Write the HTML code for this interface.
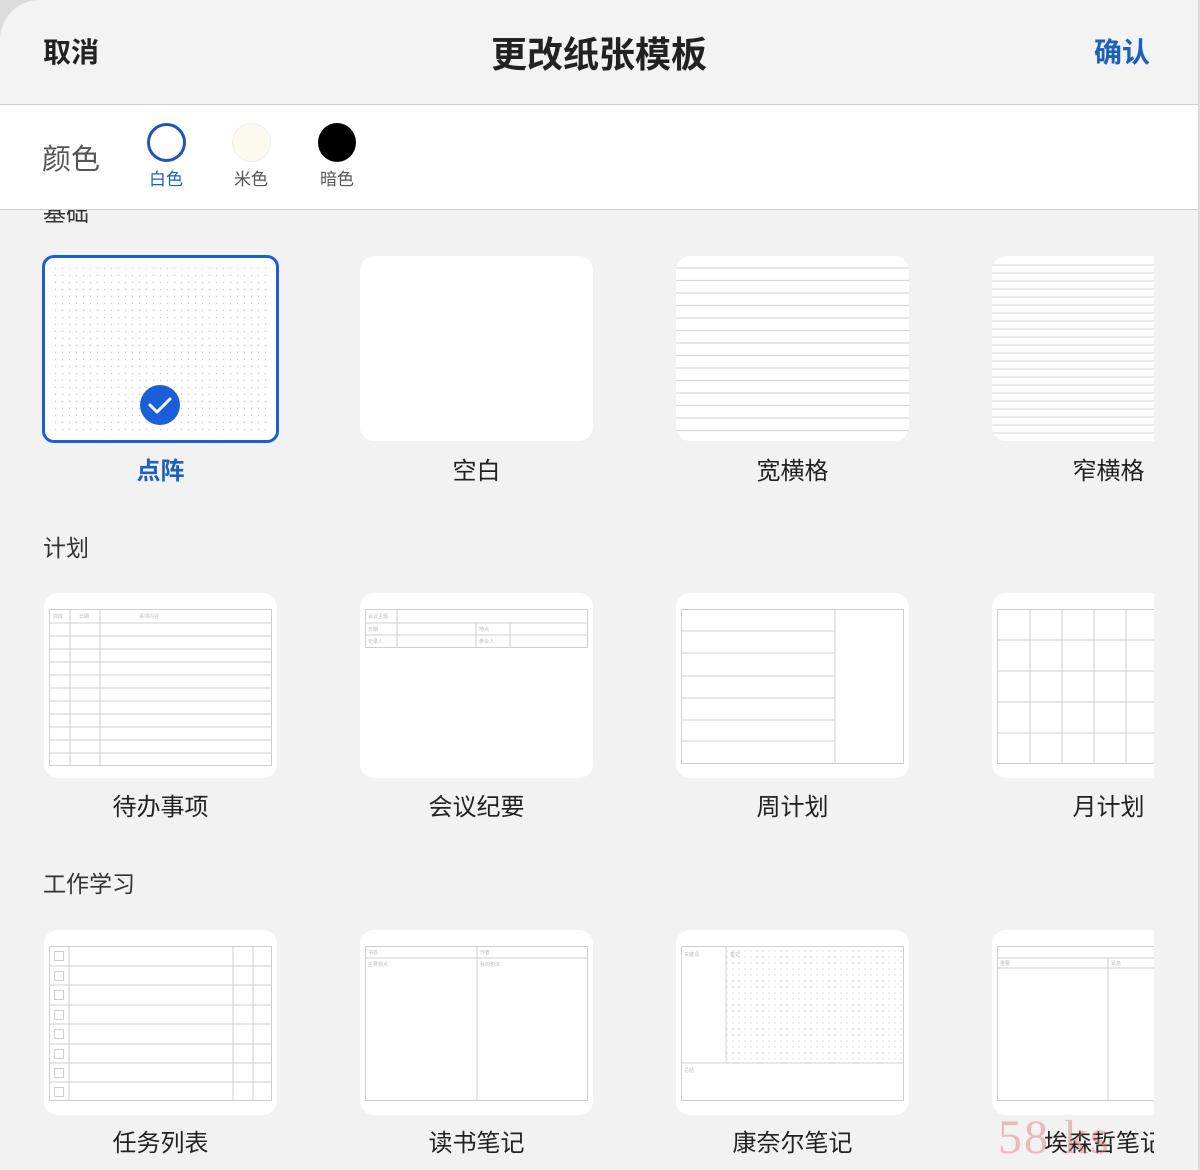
<!DOCTYPE html>
<html><head><meta charset="utf-8">
<style>
*{margin:0;padding:0;box-sizing:border-box}
body{width:1200px;height:1170px;overflow:hidden;background:#f2f2f3;font-family:"Liberation Sans","Noto Sans CJK SC",sans-serif;position:relative;color:#222}
.abs{position:absolute}
.hdr{left:0;top:0;width:1198px;height:105px;background:#f3f3f3;border-top-left-radius:40px;border-bottom:1px solid #cfcfcf}
.bar{left:0;top:104px;width:1198px;height:106px;background:#fff;border-top:1px solid #d0d0d0;border-bottom:1px solid #cfcfcf;z-index:5}
.card{position:absolute;width:233px;height:185px;background:#fff;border-radius:14px;overflow:hidden}
.lbl{position:absolute;width:233px;text-align:center;font-size:24px;color:#222}
.sec{position:absolute;left:43px;font-size:23px;color:#333}
.cl{position:absolute;font-size:17px;width:60px;text-align:center;color:#555}
</style></head><body>
<div class="abs" style="left:0;top:0;width:1200px;height:1170px;background:#dcdcdc"></div>
<div class="abs" style="left:0;top:0;width:1198px;height:1170px;background:#f2f2f3;border-top-left-radius:40px"></div>
<div class="abs hdr"></div>
<div class="abs" style="left:43px;top:31px;font-size:28px;font-weight:bold;color:#222">取消</div>
<div class="abs" style="left:0;width:1198px;top:26px;text-align:center;font-size:36px;font-weight:bold;color:#222">更改纸张模板</div>
<div class="abs" style="left:1094px;top:31px;font-size:28px;font-weight:bold;color:#1d5fbf">确认</div>

<div class="abs sec" style="top:194px;font-size:23px">基础</div>
<div class="abs bar">
  <div class="abs" style="left:42px;top:31px;font-size:29px;color:#555">颜色</div>
  <div class="abs" style="left:147px;top:18px;width:39px;height:39px;border-radius:50%;border:3px solid #1f55b8;background:#fff"></div>
  <div class="abs" style="left:232px;top:18px;width:39px;height:39px;border-radius:50%;border:1px solid #eee;background:#fcfaee"></div>
  <div class="abs" style="left:318px;top:18px;width:38px;height:39px;border-radius:50%;background:#000"></div>
  <div class="cl" style="left:136px;top:60px;color:#1d5fbf">白色</div>
  <div class="cl" style="left:221px;top:60px">米色</div>
  <div class="cl" style="left:307px;top:60px">暗色</div>
</div>

<!-- Row 1 -->
<div class="card" style="left:42px;top:255px;width:237px;height:188px;border:3px solid #1a5fd8;border-radius:12px">
<svg width="231" height="182" class="abs" style="left:0;top:0">
<defs><pattern id="d" width="7" height="7" patternUnits="userSpaceOnUse"><circle cx="3.5" cy="3.5" r="0.7" fill="#c8c8c8"/></pattern></defs>
<rect x="4" y="4" width="223" height="174" fill="url(#d)"/>
<circle cx="115" cy="147" r="20" fill="#1a5fd8"/>
<path d="M105 147 l7 7 l13 -13" stroke="#fff" stroke-width="3" fill="none" stroke-linecap="round" stroke-linejoin="round"/>
</svg></div>
<div class="lbl" style="left:44px;top:451px;color:#1d5fbf;font-weight:bold">点阵</div>

<div class="card" style="left:360px;top:256px"></div>
<div class="lbl" style="left:360px;top:451px">空白</div>

<div class="card" style="left:676px;top:256px"><svg width="233" height="185">
<g stroke="#d8d8d8" stroke-width="1.2">
<line x1="0" x2="233" y1="12" y2="12"/><line x1="0" x2="233" y1="24.5" y2="24.5"/><line x1="0" x2="233" y1="37" y2="37"/><line x1="0" x2="233" y1="49.5" y2="49.5"/><line x1="0" x2="233" y1="62" y2="62"/><line x1="0" x2="233" y1="74.5" y2="74.5"/><line x1="0" x2="233" y1="87" y2="87"/><line x1="0" x2="233" y1="99.5" y2="99.5"/><line x1="0" x2="233" y1="112" y2="112"/><line x1="0" x2="233" y1="124.5" y2="124.5"/><line x1="0" x2="233" y1="137" y2="137"/><line x1="0" x2="233" y1="149.5" y2="149.5"/><line x1="0" x2="233" y1="162" y2="162"/><line x1="0" x2="233" y1="174.5" y2="174.5"/>
</g></svg></div>
<div class="lbl" style="left:676px;top:451px">宽横格</div>

<div class="card" style="left:992px;top:256px;width:162px;border-radius:14px 0 0 14px"><svg width="162" height="185">
<g stroke="#d8d8d8" stroke-width="1">
<line x1="0" x2="162" y1="9" y2="9"/><line x1="0" x2="162" y1="17" y2="17"/><line x1="0" x2="162" y1="25" y2="25"/><line x1="0" x2="162" y1="33" y2="33"/><line x1="0" x2="162" y1="41" y2="41"/><line x1="0" x2="162" y1="49" y2="49"/><line x1="0" x2="162" y1="57" y2="57"/><line x1="0" x2="162" y1="65" y2="65"/><line x1="0" x2="162" y1="73" y2="73"/><line x1="0" x2="162" y1="81" y2="81"/><line x1="0" x2="162" y1="89" y2="89"/><line x1="0" x2="162" y1="97" y2="97"/><line x1="0" x2="162" y1="105" y2="105"/><line x1="0" x2="162" y1="113" y2="113"/><line x1="0" x2="162" y1="121" y2="121"/><line x1="0" x2="162" y1="129" y2="129"/><line x1="0" x2="162" y1="137" y2="137"/><line x1="0" x2="162" y1="145" y2="145"/><line x1="0" x2="162" y1="153" y2="153"/><line x1="0" x2="162" y1="161" y2="161"/><line x1="0" x2="162" y1="169" y2="169"/><line x1="0" x2="162" y1="177" y2="177"/>
</g></svg></div>
<div class="lbl" style="left:992px;top:451px">窄横格</div>

<div class="sec" style="top:529px">计划</div>

<!-- Row 2 -->
<div class="card" style="left:44px;top:593px"><svg width="233" height="185"><g stroke="#cfcfcf" fill="none" stroke-width="1">
<rect x="5.5" y="16.5" width="222" height="156"/>
<line x1="26" x2="26" y1="16" y2="172"/><line x1="56" x2="56" y1="16" y2="172"/>
<line x1="5" x2="228" y1="30" y2="30"/><line x1="5" x2="228" y1="43" y2="43"/><line x1="5" x2="228" y1="56" y2="56"/><line x1="5" x2="228" y1="69" y2="69"/><line x1="5" x2="228" y1="82" y2="82"/><line x1="5" x2="228" y1="95" y2="95"/><line x1="5" x2="228" y1="108" y2="108"/><line x1="5" x2="228" y1="121" y2="121"/><line x1="5" x2="228" y1="134" y2="134"/><line x1="5" x2="228" y1="147" y2="147"/><line x1="5" x2="228" y1="160" y2="160"/>
</g><g fill="#bbb" font-size="5"><text x="9" y="25">完成</text><text x="35" y="25">日期</text><text x="95" y="25">事项内容</text></g></svg></div>
<div class="lbl" style="left:44px;top:787px">待办事项</div>

<div class="card" style="left:360px;top:593px"><svg width="233" height="185"><g stroke="#cfcfcf" fill="none">
<rect x="5.5" y="16.5" width="222" height="38"/>
<line x1="37" x2="37" y1="16" y2="54"/><line x1="5" x2="228" y1="30" y2="30"/><line x1="5" x2="228" y1="42" y2="42"/>
<line x1="116" x2="116" y1="30" y2="54"/><line x1="150" x2="150" y1="30" y2="54"/>
</g><g fill="#bbb" font-size="5"><text x="8" y="25">会议主题</text><text x="8" y="38">日期</text><text x="8" y="50">记录人</text><text x="119" y="38">地点</text><text x="119" y="50">参会人</text></g></svg></div>
<div class="lbl" style="left:360px;top:787px">会议纪要</div>

<div class="card" style="left:676px;top:593px"><svg width="233" height="185"><g stroke="#cfcfcf" fill="none">
<rect x="5.5" y="16.5" width="222" height="154"/>
<line x1="159" x2="159" y1="16" y2="170"/>
<line x1="5" x2="159" y1="38" y2="38"/><line x1="5" x2="159" y1="60" y2="60"/><line x1="5" x2="159" y1="83" y2="83"/><line x1="5" x2="159" y1="105" y2="105"/><line x1="5" x2="159" y1="127" y2="127"/><line x1="5" x2="159" y1="148" y2="148"/>
</g></svg></div>
<div class="lbl" style="left:676px;top:787px">周计划</div>

<div class="card" style="left:992px;top:593px;width:162px;border-radius:14px 0 0 14px"><svg width="162" height="185"><g stroke="#cfcfcf" fill="none">
<rect x="5.5" y="16.5" width="170" height="154"/>
<line x1="38" x2="38" y1="16" y2="170"/><line x1="70" x2="70" y1="16" y2="170"/><line x1="102" x2="102" y1="16" y2="170"/><line x1="134" x2="134" y1="16" y2="170"/>
<line x1="5" x2="162" y1="47" y2="47"/><line x1="5" x2="162" y1="78" y2="78"/><line x1="5" x2="162" y1="109" y2="109"/><line x1="5" x2="162" y1="140" y2="140"/>
</g></svg></div>
<div class="lbl" style="left:992px;top:787px">月计划</div>

<div class="sec" style="top:865px">工作学习</div>

<!-- Row 3 -->
<div class="card" style="left:44px;top:930px"><svg width="233" height="185"><g stroke="#cfcfcf" fill="none">
<rect x="5.5" y="16.5" width="222" height="154"/>
<line x1="25" x2="25" y1="16" y2="170"/><line x1="189" x2="189" y1="16" y2="170"/><line x1="209" x2="209" y1="16" y2="170"/>
<line x1="5" x2="228" y1="36" y2="36"/><line x1="5" x2="228" y1="55" y2="55"/><line x1="5" x2="228" y1="75" y2="75"/><line x1="5" x2="228" y1="94" y2="94"/><line x1="5" x2="228" y1="114" y2="114"/><line x1="5" x2="228" y1="133" y2="133"/><line x1="5" x2="228" y1="152" y2="152"/>
<rect x="10.5" y="21.5" width="9" height="9"/><rect x="10.5" y="41.5" width="9" height="9"/><rect x="10.5" y="60.5" width="9" height="9"/><rect x="10.5" y="80.5" width="9" height="9"/><rect x="10.5" y="99.5" width="9" height="9"/><rect x="10.5" y="119.5" width="9" height="9"/><rect x="10.5" y="138.5" width="9" height="9"/><rect x="10.5" y="157.5" width="9" height="9"/>
</g></svg></div>
<div class="lbl" style="left:44px;top:1123px">任务列表</div>

<div class="card" style="left:360px;top:930px"><svg width="233" height="185"><g stroke="#cfcfcf" fill="none">
<rect x="5.5" y="16.5" width="222" height="154"/><line x1="5" x2="228" y1="28" y2="28"/><line x1="117" x2="117" y1="16" y2="170"/>
</g><g fill="#bbb" font-size="5"><text x="8" y="24">书名</text><text x="120" y="24">作者</text><text x="8" y="36">主要观点</text><text x="120" y="36">我的想法</text></g></svg></div>
<div class="lbl" style="left:360px;top:1123px">读书笔记</div>

<div class="card" style="left:676px;top:930px"><svg width="233" height="185">
<defs><pattern id="d2" width="6" height="6" patternUnits="userSpaceOnUse"><circle cx="3" cy="3" r="0.6" fill="#c4c4c4"/></pattern></defs>
<rect x="51" y="20" width="176" height="112" fill="url(#d2)"/>
<g stroke="#cfcfcf" fill="none">
<rect x="5.5" y="16.5" width="222" height="154"/><line x1="50" x2="50" y1="16" y2="133"/><line x1="5" x2="228" y1="133" y2="133"/>
</g><g fill="#bbb" font-size="5"><text x="8" y="26">关键词</text><text x="54" y="26">笔记</text><text x="8" y="142">总结</text></g></svg></div>
<div class="lbl" style="left:676px;top:1123px">康奈尔笔记</div>

<div class="card" style="left:992px;top:930px;width:162px;border-radius:14px 0 0 14px"><svg width="162" height="185"><g stroke="#cfcfcf" fill="none">
<rect x="5.5" y="16.5" width="170" height="154"/><line x1="5" x2="162" y1="28" y2="28"/><line x1="5" x2="162" y1="38" y2="38"/><line x1="116" x2="116" y1="28" y2="170"/>
</g><g fill="#bbb" font-size="5"><text x="8" y="35">重要</text><text x="119" y="35">紧急</text></g></svg></div>
<div class="lbl" style="top:1123px;text-align:left;width:110px;overflow:hidden;white-space:nowrap;left:1044px">埃森哲笔记</div>
<div class="abs" style="left:998px;top:1110px;font-family:'Liberation Serif',serif;font-size:48px;color:rgba(220,120,120,0.45);letter-spacing:2px;white-space:nowrap">58 ks</div>
<div class="abs" style="left:1154px;top:930px;width:44px;height:240px;background:#f2f2f3"></div>
</body></html>
